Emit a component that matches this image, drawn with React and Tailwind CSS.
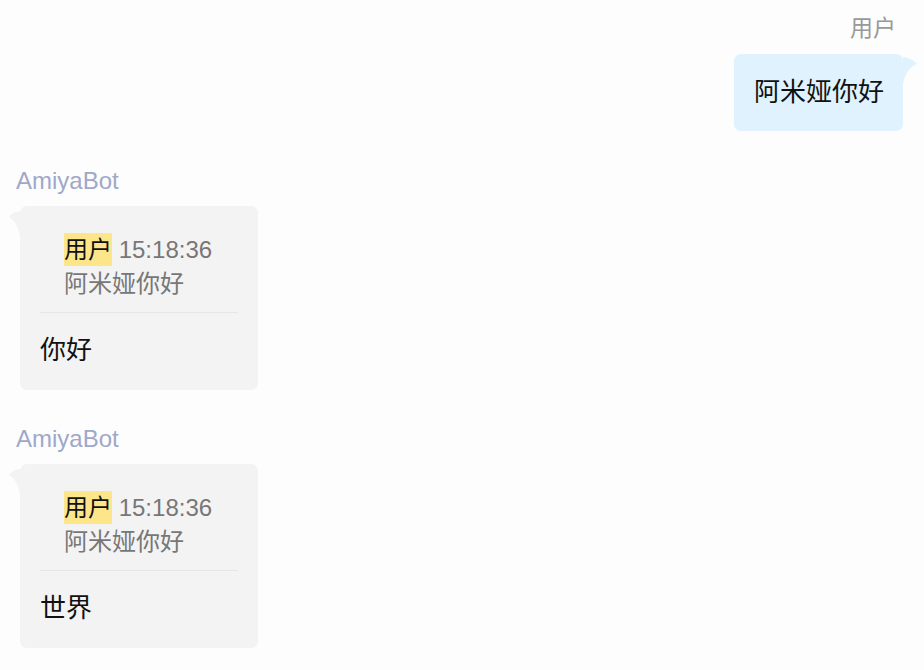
import React from "react";

const FONT = { fontFamily: '"Liberation Sans", "Noto Sans CJK SC", sans-serif' };

function TailRight() {
  return (
    <svg className="absolute left-full top-[2px]" width="15" height="28" viewBox="0 0 15 28">
      <path d="M0 1 Q9 2 14 8 Q3 12 0 28 Z" fill="#dff2fd" />
    </svg>
  );
}

function TailLeft() {
  return (
    <svg className="absolute right-full top-[4px]" width="11" height="26" viewBox="0 0 11 26">
      <path d="M11 1 Q3 2 0 7 Q8 11 11 26 Z" fill="#f3f3f3" />
    </svg>
  );
}

function BotMessage({ text, second }) {
  return (
    <div className={second ? "mt-[33px] flex flex-col items-start" : "mt-[34px] flex flex-col items-start"}>
      <div className="ml-[16px] text-[24px] leading-[32px] text-[#9fa8c9]">AmiyaBot</div>
      <div className="relative ml-[20px] mt-[9px] w-[238px] rounded-[7px] bg-[#f3f3f3] px-[20px] pt-[27px] pb-[22px]">
        <TailLeft />
        <div className="px-[24px] text-[24px] leading-[34px] text-[#777777] whitespace-nowrap">
          <div>
            <span className="inline-block bg-[#fde68a] leading-[33px] text-[#111111] align-top">用户</span>
            <span> 15:18:36</span>
          </div>
          <div>阿米娅你好</div>
        </div>
        <div className="mt-[11px] h-px bg-[#e6e6e6]" />
        <div className="mt-[19px] text-[26px] leading-[36px] text-[#111111]">{text}</div>
      </div>
    </div>
  );
}

export default function App() {
  return (
    <div className="min-h-screen w-full bg-[#fdfdfd] pt-[12px]" style={FONT}>
      <div className="flex flex-col items-end">
        <div className="mr-[28px] text-[23px] leading-[32px] text-[#999999]">用户</div>
        <div className="relative mr-[21px] mt-[10px] whitespace-nowrap rounded-[7px] bg-[#dff2fd] pl-[20px] pr-[19px] py-[20px] text-[26px] leading-[37px] text-[#111111]">
          <TailRight />
          阿米娅你好
        </div>
      </div>
      <BotMessage text="你好" />
      <BotMessage text="世界" second />
    </div>
  );
}
